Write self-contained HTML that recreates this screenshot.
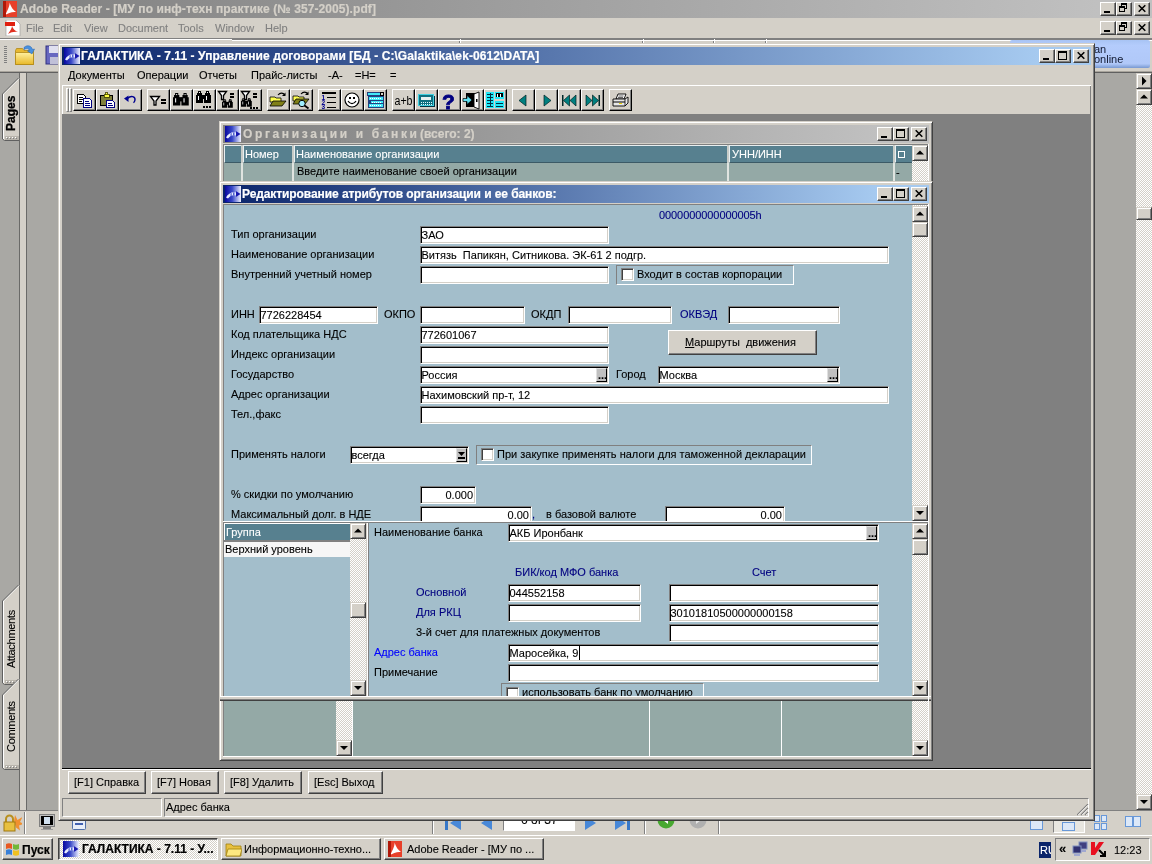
<!DOCTYPE html>
<html lang="ru">
<head>
<meta charset="utf-8">
<title>ГАЛАКТИКА - 7.11 - Управление договорами</title>
<style>
*{box-sizing:border-box;margin:0;padding:0}
html,body{width:1152px;height:864px;overflow:hidden;background:#d4d0c8}
body{position:relative;font:11px "Liberation Sans",sans-serif;color:#000}
div,svg,span.a{position:absolute}
.t{white-space:pre;line-height:14px;height:14px;-webkit-text-stroke:0.1px currentColor}
.b{font-weight:bold}
.tt{white-space:pre;font:bold 12px "Liberation Sans",sans-serif;line-height:16px;height:16px;-webkit-text-stroke:0.2px currentColor}
.rb{background:#d4d0c8;border:1px solid;border-color:#fff #404040 #404040 #fff;box-shadow:inset -1px -1px 0 #808080}
.rb2{background:#d4d0c8;border:1px solid;border-color:#d4d0c8 #404040 #404040 #d4d0c8;box-shadow:inset 1px 1px 0 #fff,inset -1px -1px 0 #808080}
.sk{border:1px solid;border-color:#808080 #fff #fff #808080}
.fld{background:#fff;border:1px solid;border-color:#808080 #fff #fff #808080;box-shadow:inset 1px 1px 0 #000,inset -1px -1px 0 #d4d0c8;padding:1px}
.gb{border:1px solid;border-color:#808080 #fff #fff #808080}
.fld .t{line-height:14px}
#root{left:0;top:0;width:1152px;height:864px;will-change:transform;overflow:hidden}
.chk{background:repeating-conic-gradient(#fff 0 25%,#d4d0c8 0 50%) 0 0/2px 2px}
.win{background:#d4d0c8;border:1px solid;border-color:#d4d0c8 #404040 #404040 #d4d0c8;box-shadow:inset 1px 1px 0 #fff,inset -1px -1px 0 #808080}

.tb{background:#d4d0c8;border:1px solid;border-color:#fff #000 #000 #fff;box-shadow:inset -1px -1px 0 #808080}
</style>
</head>
<body>
<div id="root">
<!-- Adobe Reader (background window) -->
<div style="left:0px;top:0px;width:1152px;height:18px;background:linear-gradient(90deg,#808080,#c0c0c0 1098px)"></div>
<svg style="left:3px;top:1px;" width="16" height="16" viewBox="0 0 16 16"><rect x="0" y="0" width="14" height="16" fill="#e8402a"/><path d="M2 14C5 9 7 4 6.5 1.5C8 6 10 9 13 11C9 10.5 5 12 2 14z" fill="#fff"/><path d="M0 0h3v16h-3z" fill="#b01808"/></svg>
<div class="tt" style="left:20px;top:1px;color:#d4d0c8;letter-spacing:0.08px">Adobe Reader - [МУ по инф-техн практике (№ 357-2005).pdf]</div>
<div class="rb" style="left:1100px;top:2px;width:16px;height:14px;"><svg style="left:-1px;top:-1px" width="16" height="14" viewBox="0 0 16 14"><rect x="4" y="9" width="6" height="2" fill="#000"/></svg></div>
<div class="rb" style="left:1116px;top:2px;width:16px;height:14px;"><svg style="left:-1px;top:-1px" width="16" height="14" viewBox="0 0 16 14"><rect x="5.5" y="1.5" width="5" height="5" fill="none" stroke="#000"/><rect x="5" y="1" width="6" height="2" fill="#000"/><rect x="3.5" y="4.5" width="5" height="5" fill="#d4d0c8" stroke="#000"/><rect x="3" y="4" width="6" height="2" fill="#000"/></svg></div>
<div class="rb" style="left:1134px;top:2px;width:16px;height:14px;"><svg style="left:-1px;top:-1px" width="16" height="14" viewBox="0 0 16 14"><path d="M4.7 3.3L11.3 9.7M11.3 3.3L4.7 9.7" stroke="#000" stroke-width="1.6" fill="none"/></svg></div>
<div style="left:0px;top:18px;width:1152px;height:20px;background:#d4d0c8"></div>
<svg style="left:5px;top:20px;" width="16" height="16" viewBox="0 0 16 16"><path d="M1 0h10l4 4v12h-14z" fill="#fff" stroke="#999" stroke-width="0.6"/><rect x="0" y="2" width="10" height="4" fill="#e02010"/><path d="M3 14C5 11 7 8 7 6C8 9 10 11 13 12C9 11.5 6 12.5 3 14z" fill="#e03020"/></svg>
<div class="t" style="left:26px;top:21px;color:#808080">File</div>
<div class="t" style="left:53px;top:21px;color:#808080">Edit</div>
<div class="t" style="left:84px;top:21px;color:#808080">View</div>
<div class="t" style="left:118px;top:21px;color:#808080">Document</div>
<div class="t" style="left:178px;top:21px;color:#808080">Tools</div>
<div class="t" style="left:215px;top:21px;color:#808080">Window</div>
<div class="t" style="left:265px;top:21px;color:#808080">Help</div>
<div class="rb" style="left:1100px;top:21px;width:16px;height:14px;"><svg style="left:-1px;top:-1px" width="16" height="14" viewBox="0 0 16 14"><rect x="4" y="9" width="6" height="2" fill="#000"/></svg></div>
<div class="rb" style="left:1116px;top:21px;width:16px;height:14px;"><svg style="left:-1px;top:-1px" width="16" height="14" viewBox="0 0 16 14"><rect x="5.5" y="1.5" width="5" height="5" fill="none" stroke="#000"/><rect x="5" y="1" width="6" height="2" fill="#000"/><rect x="3.5" y="4.5" width="5" height="5" fill="#d4d0c8" stroke="#000"/><rect x="3" y="4" width="6" height="2" fill="#000"/></svg></div>
<div class="rb" style="left:1134px;top:21px;width:16px;height:14px;"><svg style="left:-1px;top:-1px" width="16" height="14" viewBox="0 0 16 14"><path d="M4.7 3.3L11.3 9.7M11.3 3.3L4.7 9.7" stroke="#000" stroke-width="1.6" fill="none"/></svg></div>
<div style="left:0px;top:38px;width:1152px;height:1px;background:#808080"></div>
<div style="left:0px;top:39px;width:1152px;height:1px;background:#fff"></div>
<div style="left:0px;top:40px;width:1152px;height:31px;background:#d4d0c8"></div>
<div style="left:4px;top:46px;width:3px;height:18px;background:repeating-linear-gradient(180deg,#808080 0 1px,#d4d0c8 1px 2px)"></div>
<svg style="left:14px;top:44px;" width="24" height="24" viewBox="0 0 24 24"><defs><linearGradient id="fg" x1="0" y1="0" x2="0" y2="1"><stop offset="0" stop-color="#fff0a0"/><stop offset="1" stop-color="#e8b828"/></linearGradient></defs><path d="M1.5 6.5l1-2h6l1.5 2h9.5v14h-18z" fill="#e8b830" stroke="#b08818" stroke-width="0.8"/><path d="M1.5 8.5h18v12h-18z" fill="url(#fg)" stroke="#b08818" stroke-width="0.8"/><path d="M10 3.5c3-3 7.5-2 8.5 2l2-0.5l-2.5 5l-4.5-3l2-0.7c-1-2-3-2.3-5.5-0.8z" fill="#4890e0" stroke="#2060b0" stroke-width="0.5"/></svg>
<svg style="left:45px;top:45px;" width="20" height="20" viewBox="0 0 20 20"><rect x="1" y="1" width="18" height="18" fill="#6868c0" stroke="#303080"/><rect x="4" y="1" width="12" height="7" fill="#e0e0f0"/><rect x="5" y="12" width="10" height="7" fill="#c0c0d8"/></svg>
<div style="left:232px;top:39px;width:920px;height:1px;background:#808080"></div>
<div style="left:459px;top:39px;width:1px;height:4px;background:#808080"></div>
<div style="left:460px;top:39px;width:1px;height:4px;background:#fff"></div>
<div style="left:642px;top:39px;width:1px;height:4px;background:#808080"></div>
<div style="left:643px;top:39px;width:1px;height:4px;background:#fff"></div>
<div style="left:713px;top:39px;width:1px;height:4px;background:#808080"></div>
<div style="left:714px;top:39px;width:1px;height:4px;background:#fff"></div>
<div style="left:765px;top:39px;width:1px;height:4px;background:#808080"></div>
<div style="left:766px;top:39px;width:1px;height:4px;background:#fff"></div>
<div style="left:232px;top:40px;width:920px;height:1px;background:#fff"></div>
<div style="left:1010px;top:40px;width:140px;height:28px;background:linear-gradient(180deg,#a8c4f4,#b4ccfc 20%,#b0c8f8 85%,#7898d0);border-radius:2px"></div>
<div class="t" style="left:1094px;top:42px;color:#101830;font-size:11px;-webkit-text-stroke:0">an</div>
<div class="t" style="left:1094px;top:52px;color:#101830;font-size:11px;-webkit-text-stroke:0">online</div>
<div style="left:0px;top:71px;width:1152px;height:1px;background:#a8a49c"></div>
<div style="left:0px;top:72px;width:1152px;height:1px;background:#606060"></div>
<div style="left:0px;top:73px;width:20px;height:737px;background:#a9a8a4"></div>
<div style="left:19px;top:73px;width:1px;height:737px;background:#6a6a68"></div>
<div style="left:20px;top:73px;width:6px;height:737px;background:#d4d0c8"></div>
<div style="left:26px;top:73px;width:1px;height:737px;background:#6a6a68"></div>
<div style="left:27px;top:73px;width:1109px;height:737px;background:#a9a8a4"></div>
<svg style="left:0px;top:78px;" width="20" height="64" viewBox="0 0 20 64"><polygon points="19,0 3,16 3,61 5,63 19,63" fill="#d4d0c8"/><polyline points="19,0.5 3.5,16 3.5,61" fill="none" stroke="#fff" stroke-width="1"/><polyline points="19,-0.5 2.5,16 2.5,61 4.5,62.5 19,62.5" fill="none" stroke="#606060" stroke-width="1"/><rect x="5" y="58" width="14" height="4" fill="#b8b4ac"/><rect x="6" y="59" width="1" height="1" fill="#fff"/><rect x="7" y="60" width="1" height="1" fill="#808080"/><rect x="9" y="59" width="1" height="1" fill="#fff"/><rect x="10" y="60" width="1" height="1" fill="#808080"/><rect x="12" y="59" width="1" height="1" fill="#fff"/><rect x="13" y="60" width="1" height="1" fill="#808080"/><rect x="15" y="59" width="1" height="1" fill="#fff"/><rect x="16" y="60" width="1" height="1" fill="#808080"/></svg><div class="t" style="left:4px;top:131px;font-weight:bold;font-size:12px;-webkit-text-stroke:0.3px #000;transform-origin:0 0;transform:rotate(-90deg)">Pages</div>
<svg style="left:0px;top:585px;" width="20" height="101" viewBox="0 0 20 101"><polygon points="19,0 3,16 3,98 5,100 19,100" fill="#d4d0c8"/><polyline points="19,0.5 3.5,16 3.5,98" fill="none" stroke="#fff" stroke-width="1"/><polyline points="19,-0.5 2.5,16 2.5,98 4.5,99.5 19,99.5" fill="none" stroke="#606060" stroke-width="1"/><rect x="5" y="95" width="14" height="4" fill="#b8b4ac"/><rect x="6" y="96" width="1" height="1" fill="#fff"/><rect x="7" y="97" width="1" height="1" fill="#808080"/><rect x="9" y="96" width="1" height="1" fill="#fff"/><rect x="10" y="97" width="1" height="1" fill="#808080"/><rect x="12" y="96" width="1" height="1" fill="#fff"/><rect x="13" y="97" width="1" height="1" fill="#808080"/><rect x="15" y="96" width="1" height="1" fill="#fff"/><rect x="16" y="97" width="1" height="1" fill="#808080"/></svg><div class="t" style="left:4px;top:668px;font-weight:normal;font-size:11px;letter-spacing:-0.3px;transform-origin:0 0;transform:rotate(-90deg)">Attachments</div>
<svg style="left:0px;top:679px;" width="20" height="92" viewBox="0 0 20 92"><polygon points="19,0 3,16 3,89 5,91 19,91" fill="#d4d0c8"/><polyline points="19,0.5 3.5,16 3.5,89" fill="none" stroke="#fff" stroke-width="1"/><polyline points="19,-0.5 2.5,16 2.5,89 4.5,90.5 19,90.5" fill="none" stroke="#606060" stroke-width="1"/><rect x="5" y="86" width="14" height="4" fill="#b8b4ac"/><rect x="6" y="87" width="1" height="1" fill="#fff"/><rect x="7" y="88" width="1" height="1" fill="#808080"/><rect x="9" y="87" width="1" height="1" fill="#fff"/><rect x="10" y="88" width="1" height="1" fill="#808080"/><rect x="12" y="87" width="1" height="1" fill="#fff"/><rect x="13" y="88" width="1" height="1" fill="#808080"/><rect x="15" y="87" width="1" height="1" fill="#fff"/><rect x="16" y="88" width="1" height="1" fill="#808080"/></svg><div class="t" style="left:4px;top:752px;font-weight:normal;font-size:11px;letter-spacing:-0.3px;transform-origin:0 0;transform:rotate(-90deg)">Comments</div>
<div class="chk" style="left:1136px;top:73px;width:16px;height:737px;"></div>
<div class="rb2" style="left:1136px;top:73px;width:16px;height:16px;"><svg style="left:-1px;top:-1px" width="16" height="16" viewBox="0 0 16 16"><path d="M6 3.5L10.5 8L6 12.5z" fill="#000"/></svg></div>
<div class="rb2" style="left:1136px;top:89px;width:16px;height:16px;"><svg style="left:-1px;top:-1px" width="16" height="16" viewBox="0 0 16 16"><path d="M4 9.5L8 5.5L12 9.5z" fill="#000"/></svg></div>
<div class="rb2" style="left:1136px;top:207px;width:16px;height:13px;"></div>
<div class="rb2" style="left:1136px;top:794px;width:16px;height:16px;"><svg style="left:-1px;top:-1px" width="16" height="16" viewBox="0 0 16 16"><path d="M4 6L12 6L8 10z" fill="#000"/></svg></div>
<div style="left:0px;top:810px;width:1152px;height:24px;background:#d4d0c8"></div>
<div style="left:0px;top:810px;width:1152px;height:1px;background:#808080"></div>
<svg style="left:2px;top:813px;" width="20" height="20" viewBox="0 0 20 20"><path d="M12 8l1-6l2.5 5l5-3l-2.5 5l4 2l-5 1.5l1 5l-4-3z" fill="#f09030"/><path d="M4 9v-3a3.5 3.5 0 0 1 7 0v3" fill="none" stroke="#b89020" stroke-width="2"/><rect x="2" y="9" width="11" height="9" fill="#e8c040" stroke="#a07810"/></svg>
<div style="left:24px;top:812px;width:1px;height:22px;background:#808080"></div>
<div style="left:25px;top:812px;width:1px;height:22px;background:#fff"></div>
<svg style="left:39px;top:814px;" width="16" height="17" viewBox="0 0 16 17"><rect x="0.5" y="0.5" width="15" height="12" fill="#c0c0c0" stroke="#808080"/><rect x="2" y="2" width="12" height="9" fill="#000"/><rect x="5" y="3" width="6" height="7" fill="#d0e0f0"/><rect x="4" y="13" width="8" height="2" fill="#808080"/><rect x="2" y="15" width="12" height="1" fill="#a0a0a0"/></svg>
<svg style="left:72px;top:816px;" width="14" height="14" viewBox="0 0 14 14"><rect x="0.5" y="0.5" width="13" height="13" rx="1" fill="#e8eef8" stroke="#5070a8"/><rect x="3" y="7" width="8" height="2" fill="#4060b0"/></svg>
<div style="left:432px;top:812px;width:1px;height:22px;background:#808080"></div>
<div style="left:433px;top:812px;width:1px;height:22px;background:#fff"></div>
<svg style="left:445px;top:816px;" width="18" height="16" viewBox="0 0 18 16"><rect x="0" y="0" width="3" height="14" fill="#3878c8"/><path d="M16 0v14l-11-7z" fill="#4888d8"/></svg>
<svg style="left:480px;top:816px;" width="14" height="16" viewBox="0 0 14 16"><path d="M12 0v14l-11-7z" fill="#4888d8"/></svg>
<div style="left:503px;top:812px;width:72px;height:19px;background:#fff;border:1px solid;border-color:#808080 #fff #fff #808080"></div>
<div class="t" style="left:521px;top:813px;font-size:12px">6 of 37</div>
<svg style="left:584px;top:816px;" width="14" height="16" viewBox="0 0 14 16"><path d="M1 0v14l11-7z" fill="#4888d8"/></svg>
<svg style="left:614px;top:816px;" width="18" height="16" viewBox="0 0 18 16"><path d="M1 0v14l11-7z" fill="#4888d8"/><rect x="13" y="0" width="3" height="14" fill="#3878c8"/></svg>
<div style="left:644px;top:812px;width:1px;height:22px;background:#808080"></div>
<div style="left:645px;top:812px;width:1px;height:22px;background:#fff"></div>
<svg style="left:657px;top:811px;" width="18" height="18" viewBox="0 0 18 18"><circle cx="9" cy="9" r="8.5" fill="#48a830"/><path d="M11 5l-5 4l5 4z" fill="#fff"/></svg>
<svg style="left:689px;top:811px;" width="18" height="18" viewBox="0 0 18 18"><circle cx="9" cy="9" r="8.5" fill="#b0b0b0"/><path d="M7 5l5 4l-5 4z" fill="#e8e8e8"/></svg>
<div style="left:718px;top:812px;width:1px;height:22px;background:#808080"></div>
<div style="left:719px;top:812px;width:1px;height:22px;background:#fff"></div>
<svg style="left:1030px;top:817px;" width="14" height="14" viewBox="0 0 14 14"><rect x="0.5" y="0.5" width="12" height="12" fill="#dce8f8" stroke="#6898d8"/></svg>
<div style="left:1053px;top:812px;width:32px;height:21px;background:#e8e6e0;border:1px solid;border-color:#808080 #fff #fff #808080"></div>
<svg style="left:1062px;top:817px;" width="14" height="14" viewBox="0 0 14 14"><rect x="0.5" y="0.5" width="12" height="3" fill="#dce8f8" stroke="#6898d8"/><rect x="0.5" y="5.5" width="12" height="8" fill="#dce8f8" stroke="#6898d8"/></svg>
<svg style="left:1094px;top:815px;" width="14" height="16" viewBox="0 0 14 16"><rect x="0.5" y="0.5" width="5" height="6" fill="#dce8f8" stroke="#6898d8"/><rect x="7.5" y="0.5" width="5" height="6" fill="#dce8f8" stroke="#6898d8"/><rect x="0.5" y="8.5" width="5" height="6" fill="#dce8f8" stroke="#6898d8"/><rect x="7.5" y="8.5" width="5" height="6" fill="#dce8f8" stroke="#6898d8"/></svg>
<svg style="left:1125px;top:816px;" width="17" height="12" viewBox="0 0 17 12"><rect x="0.5" y="0.5" width="7" height="10" fill="#dce8f8" stroke="#6898d8"/><rect x="8.5" y="0.5" width="7" height="10" fill="#dce8f8" stroke="#6898d8"/></svg>
<!-- Taskbar -->
<div style="left:0px;top:834px;width:1152px;height:30px;background:#d4d0c8"></div>
<div style="left:0px;top:835px;width:1152px;height:1px;background:#fff"></div>
<div class="rb" style="left:2px;top:838px;width:51px;height:22px;"></div>
<svg style="left:5px;top:841px;" width="16" height="16" viewBox="0 0 16 16"><path d="M1 3c2-1 4-1 6 0v5c-2-1-4-1-6 0z" fill="#e85820"/><path d="M8 3c2 1 4 1 6 0v5c-2 1-4 1-6 0z" fill="#70b838"/><path d="M1 9c2-1 4-1 6 0v5c-2-1-4-1-6 0z" fill="#3880d8"/><path d="M8 9c2 1 4 1 6 0v5c-2 1-4 1-6 0z" fill="#f0c020"/></svg>
<div class="tt" style="left:22px;top:842px;font-size:12px">Пуск</div>
<div class="chk" style="left:58px;top:838px;width:160px;height:22px;border:1px solid;border-color:#404040 #fff #fff #404040;box-shadow:inset 1px 1px 0 #808080"></div>
<svg style="left:63px;top:841px;" width="16" height="16" viewBox="0 0 16 16"><defs><linearGradient id="gi1" x1="0" x2="1"><stop offset="0" stop-color="#0808a0"/><stop offset="0.45" stop-color="#3848c8"/><stop offset="1" stop-color="#f0f2ff"/></linearGradient></defs><rect width="16" height="16" fill="url(#gi1)"/><path d="M1 11.5c2-4 6-6 10-5l0-1.5l4.5 3l-4.5 3l0-1.5c-3-1-6 0-8 3z" fill="#e8ecff"/><path d="M8 6.5l1.5-0.3l0 3l-1.5 0.3zM5.5 7.5l1.2-0.6l0 3l-1.2 0.6z" fill="#5060d0"/><path d="M11 5l4.5 3l-4.5 3z" fill="#1818b0"/></svg>
<div class="tt" style="left:82px;top:841px;">ГАЛАКТИКА - 7.11 - У...</div>
<div class="rb" style="left:221px;top:838px;width:160px;height:22px;"></div>
<svg style="left:225px;top:841px;" width="17" height="16" viewBox="0 0 17 16"><path d="M1 3h5l2 2h8v10h-15z" fill="#e8c040" stroke="#a08010" stroke-width="0.8"/><path d="M1 15l2-7h14l-2 7z" fill="#fce880" stroke="#a08010" stroke-width="0.8"/></svg>
<div class="t" style="left:244px;top:842px;">Информационно-техно...</div>
<div class="rb" style="left:384px;top:838px;width:160px;height:22px;"></div>
<svg style="left:388px;top:841px;" width="16" height="16" viewBox="0 0 16 16"><rect x="0" y="0" width="14" height="16" fill="#e8402a"/><path d="M2 14C5 9 7 4 6.5 1.5C8 6 10 9 13 11C9 10.5 5 12 2 14z" fill="#fff"/><path d="M0 0h3v16h-3z" fill="#b01808"/></svg>
<div class="t" style="left:407px;top:842px;">Adobe Reader - [МУ по ...</div>
<div style="left:1039px;top:842px;width:12px;height:16px;background:#0a246a"></div>
<div class="t" style="left:1040px;top:843px;color:#fff;width:11px;overflow:hidden">RU</div>
<div style="left:1055px;top:838px;width:95px;height:23px;border:1px solid;border-color:#808080 #fff #fff #808080"></div>
<div class="t" style="left:1059px;top:842px;font-weight:bold;font-size:13px">«</div>
<svg style="left:1072px;top:841px;" width="16" height="16" viewBox="0 0 16 16"><rect x="7" y="1" width="8" height="7" fill="#404080" stroke="#8090c0"/><rect x="1" y="5" width="8" height="7" fill="#303070" stroke="#8090c0"/><rect x="2" y="13" width="6" height="2" fill="#a0a8d0"/><rect x="9" y="9" width="5" height="2" fill="#a0a8d0"/></svg>
<svg style="left:1090px;top:841px;" width="16" height="16" viewBox="0 0 16 16"><path d="M1 1h4v6l4-6h5l-9 13h-4z" fill="#e81020"/><path d="M9 9l6 6m0-5v5h-5" stroke="#000" stroke-width="2" fill="none"/></svg>
<div class="t" style="left:1114px;top:843px;">12:23</div>
<!-- Galaktika main window -->
<div class="win" style="left:58px;top:43px;width:1037px;height:778px;"></div>
<div style="left:62px;top:47px;width:1029px;height:18px;background:linear-gradient(90deg,#0a246a,#a6caf0 977px)"></div>
<svg style="left:64px;top:48px;" width="16" height="16" viewBox="0 0 16 16"><defs><linearGradient id="gi2" x1="0" x2="1"><stop offset="0" stop-color="#0808a0"/><stop offset="0.45" stop-color="#3848c8"/><stop offset="1" stop-color="#f0f2ff"/></linearGradient></defs><rect width="16" height="16" fill="url(#gi2)"/><path d="M1 11.5c2-4 6-6 10-5l0-1.5l4.5 3l-4.5 3l0-1.5c-3-1-6 0-8 3z" fill="#e8ecff"/><path d="M8 6.5l1.5-0.3l0 3l-1.5 0.3zM5.5 7.5l1.2-0.6l0 3l-1.2 0.6z" fill="#5060d0"/><path d="M11 5l4.5 3l-4.5 3z" fill="#1818b0"/></svg>
<div class="tt" style="left:81px;top:48px;color:#fff;letter-spacing:0.08px">ГАЛАКТИКА - 7.11 - Управление договорами [БД - C:\Galaktika\ek-0612\DATA]</div>
<div class="rb" style="left:1039px;top:49px;width:16px;height:14px;"><svg style="left:-1px;top:-1px" width="16" height="14" viewBox="0 0 16 14"><rect x="4" y="9" width="6" height="2" fill="#000"/></svg></div>
<div class="rb" style="left:1055px;top:49px;width:16px;height:14px;"><svg style="left:-1px;top:-1px" width="16" height="14" viewBox="0 0 16 14"><rect x="3.5" y="2.5" width="8" height="8" fill="none" stroke="#000"/><rect x="3" y="2" width="9" height="2" fill="#000"/></svg></div>
<div class="rb" style="left:1073px;top:49px;width:16px;height:14px;"><svg style="left:-1px;top:-1px" width="16" height="14" viewBox="0 0 16 14"><path d="M4.7 3.3L11.3 9.7M11.3 3.3L4.7 9.7" stroke="#000" stroke-width="1.6" fill="none"/></svg></div>
<div class="t" style="left:68px;top:68px;">Документы</div>
<div class="t" style="left:137px;top:68px;">Операции</div>
<div class="t" style="left:199px;top:68px;">Отчеты</div>
<div class="t" style="left:251px;top:68px;">Прайс-листы</div>
<div class="t" style="left:328px;top:68px;">-А-</div>
<div class="t" style="left:355px;top:68px;">=Н=</div>
<div class="t" style="left:390px;top:68px;">=</div>
<div style="left:62px;top:85px;width:1029px;height:1px;background:#fff"></div>
<div style="left:62px;top:85px;width:1px;height:29px;background:#fff"></div>
<div style="left:1090px;top:86px;width:1px;height:28px;background:#808080"></div>
<div style="left:66px;top:88px;width:3px;height:24px;border:1px solid;border-color:#fff #808080 #808080 #fff;background:#d4d0c8"></div>
<div style="left:69px;top:88px;width:3px;height:24px;border:1px solid;border-color:#fff #808080 #808080 #fff;background:#d4d0c8"></div>
<div class="tb" style="left:73px;top:89px;width:23px;height:22px;"><svg style="left:-1px;top:-1px" width="23" height="22" viewBox="0 0 23 22"><g shape-rendering="crispEdges"><path d="M4.5 5.5h6l2 2v7h-8z" fill="#fff" stroke="#000"/><path d="M6 8.5h4M6 10.5h5M6 12.5h3" stroke="#000" stroke-width="1"/><path d="M10.5 9.5h6l2 2v7h-8z" fill="#fff" stroke="#000080"/><path d="M12 12.5h4M12 14.5h5M12 16.5h5" stroke="#000080" stroke-width="1"/></g></svg></div><div class="tb" style="left:96px;top:89px;width:23px;height:22px;"><svg style="left:-1px;top:-1px" width="23" height="22" viewBox="0 0 23 22"><g shape-rendering="crispEdges"><rect x="4.5" y="6.5" width="12" height="10" fill="#80803c" stroke="#000"/><rect x="8" y="5" width="5" height="3" fill="#ffff40" stroke="#404000" stroke-width="0.8"/><rect x="9.5" y="3.5" width="2" height="2" fill="#ffff40" stroke="#404000" stroke-width="0.8"/><path d="M10.5 11.5h6l2 2v5h-8z" fill="#fff" stroke="#000080"/><path d="M12 14.5h4M12 16.5h5" stroke="#000080" stroke-width="1"/></g></svg></div><div class="tb" style="left:119px;top:89px;width:23px;height:22px;"><svg style="left:-1px;top:-1px" width="23" height="22" viewBox="0 0 23 22"><path d="M5 9.5l4.5-3v6.5z" fill="#000090"/><path d="M8.5 9.5c3.5-3.5 8-2 7.5 1.5c-0.2 1.5-0.8 2.2-1.5 2.8" fill="none" stroke="#000090" stroke-width="1.4"/></svg></div><div class="tb" style="left:147px;top:89px;width:23px;height:22px;"><svg style="left:-1px;top:-1px" width="23" height="22" viewBox="0 0 23 22"><path d="M3.5 7.5h9l-3.5 4.5v4h-2v-4z" fill="#fff" stroke="#000" stroke-width="1.3" stroke-linejoin="miter"/><rect x="14" y="10" width="5" height="2" fill="#000"/><rect x="14" y="13" width="5" height="2" fill="#000"/></svg></div><div class="tb" style="left:170px;top:89px;width:23px;height:22px;"><svg style="left:-1px;top:-1px" width="23" height="22" viewBox="0 0 23 22"><g transform="translate(3,4) scale(1.05)"><path d="M2 0h3v2h1v2h1v8h-7v-8h1v-2h1zM10 0h3v2h1v2h1v8h-7v-8h1v-2h1z" fill="#000"/><rect x="6" y="4" width="3" height="4" fill="#000"/><rect x="2" y="5" width="1" height="4" fill="#fff"/><rect x="10" y="5" width="1" height="4" fill="#fff"/><rect x="3" y="1" width="1" height="1" fill="#fff"/><rect x="11" y="1" width="1" height="1" fill="#fff"/></g></svg></div><div class="tb" style="left:193px;top:89px;width:23px;height:22px;"><svg style="left:-1px;top:-1px" width="23" height="22" viewBox="0 0 23 22"><g transform="translate(3,2) scale(1.0)"><path d="M2 0h3v2h1v2h1v8h-7v-8h1v-2h1zM10 0h3v2h1v2h1v8h-7v-8h1v-2h1z" fill="#000"/><rect x="6" y="4" width="3" height="4" fill="#000"/><rect x="2" y="5" width="1" height="4" fill="#fff"/><rect x="10" y="5" width="1" height="4" fill="#fff"/><rect x="3" y="1" width="1" height="1" fill="#fff"/><rect x="11" y="1" width="1" height="1" fill="#fff"/></g><rect x="10" y="17" width="2" height="2" fill="#000"/><rect x="13" y="17" width="2" height="2" fill="#000"/><rect x="16" y="17" width="2" height="2" fill="#000"/></svg></div><div class="tb" style="left:216px;top:89px;width:23px;height:22px;"><svg style="left:-1px;top:-1px" width="23" height="22" viewBox="0 0 23 22"><path d="M2.5 2.5h8l-3.0 4.0v4h-2v-4z" fill="#fff" stroke="#000" stroke-width="1.3" stroke-linejoin="miter"/><rect x="14" y="4" width="4" height="2" fill="#000"/><rect x="14" y="7" width="4" height="2" fill="#000"/><g transform="translate(6,10) scale(0.72)"><path d="M2 0h3v2h1v2h1v8h-7v-8h1v-2h1zM10 0h3v2h1v2h1v8h-7v-8h1v-2h1z" fill="#000"/><rect x="6" y="4" width="3" height="4" fill="#000"/><rect x="2" y="5" width="1" height="4" fill="#fff"/><rect x="10" y="5" width="1" height="4" fill="#fff"/><rect x="3" y="1" width="1" height="1" fill="#fff"/><rect x="11" y="1" width="1" height="1" fill="#fff"/></g></svg></div><div class="tb" style="left:239px;top:89px;width:23px;height:22px;"><svg style="left:-1px;top:-1px" width="23" height="22" viewBox="0 0 23 22"><path d="M2.5 2.5h8l-3.0 4.0v4h-2v-4z" fill="#fff" stroke="#000" stroke-width="1.3" stroke-linejoin="miter"/><rect x="14" y="4" width="4" height="2" fill="#000"/><rect x="14" y="7" width="4" height="2" fill="#000"/><g transform="translate(2,9) scale(0.72)"><path d="M2 0h3v2h1v2h1v8h-7v-8h1v-2h1zM10 0h3v2h1v2h1v8h-7v-8h1v-2h1z" fill="#000"/><rect x="6" y="4" width="3" height="4" fill="#000"/><rect x="2" y="5" width="1" height="4" fill="#fff"/><rect x="10" y="5" width="1" height="4" fill="#fff"/><rect x="3" y="1" width="1" height="1" fill="#fff"/><rect x="11" y="1" width="1" height="1" fill="#fff"/></g><rect x="11" y="18" width="2" height="2" fill="#000"/><rect x="14" y="18" width="2" height="2" fill="#000"/><rect x="17" y="18" width="2" height="2" fill="#000"/></svg></div><div class="tb" style="left:267px;top:89px;width:23px;height:22px;"><svg style="left:-1px;top:-1px" width="23" height="22" viewBox="0 0 23 22"><path d="M3 8h5l1 1h5v4h-11z" fill="#ffff50" stroke="#000" stroke-width="0.8"/><path d="M3 17l3-5h13l-4 5z" fill="#808018" stroke="#000" stroke-width="0.8"/><path d="M11 6c2-2.5 5-2.5 7 0" fill="none" stroke="#000" stroke-width="1.1"/><path d="M18.5 3.5v3.5h-3.5z" fill="#000"/></svg></div><div class="tb" style="left:290px;top:89px;width:23px;height:22px;"><svg style="left:-1px;top:-1px" width="23" height="22" viewBox="0 0 23 22"><path d="M3 7h5l1 1h5v4h-11z" fill="#ffff50" stroke="#000" stroke-width="0.8"/><path d="M3 15l3-5h13l-4 5z" fill="#808018" stroke="#000" stroke-width="0.8"/><path d="M11 5c2-2.5 5-2.5 7 0" fill="none" stroke="#000" stroke-width="1.1"/><path d="M18.5 2.5v3.5h-3.5z" fill="#000"/><circle cx="12" cy="14.5" r="3.2" fill="#a0f0ff" stroke="#000" stroke-width="1"/><path d="M14.5 16.5l4 3" stroke="#000" stroke-width="1.8"/></svg></div><div class="tb" style="left:318px;top:89px;width:23px;height:22px;"><svg style="left:-1px;top:-1px" width="23" height="22" viewBox="0 0 23 22"><g shape-rendering="crispEdges"><rect x="4" y="3" width="14" height="2" fill="#000"/><path d="M9 8.5h9M9 13.5h9M9 18.5h9" stroke="#000" stroke-width="1"/></g><text x="3.5" y="10.5" font-family="Liberation Sans,sans-serif" font-size="6.500" font-weight="bold" fill="#000090">1</text><text x="3.5" y="15.5" font-family="Liberation Sans,sans-serif" font-size="6.500" font-weight="bold" fill="#000090">2</text><text x="3.5" y="20" font-family="Liberation Sans,sans-serif" font-size="6.500" font-weight="bold" fill="#000090">3</text></svg></div><div class="tb" style="left:341px;top:89px;width:23px;height:22px;"><svg style="left:-1px;top:-1px" width="23" height="22" viewBox="0 0 23 22"><circle cx="11" cy="11" r="7" fill="#fff" stroke="#000" stroke-width="1.2"/><rect x="8" y="8" width="2" height="2" fill="#000"/><rect x="12" y="8" width="2" height="2" fill="#000"/><path d="M7 12c2 3.5 6 3.5 8 0" fill="none" stroke="#000" stroke-width="1.2"/></svg></div><div class="tb" style="left:364px;top:89px;width:23px;height:22px;"><svg style="left:-1px;top:-1px" width="23" height="22" viewBox="0 0 23 22"><g shape-rendering="crispEdges"><rect x="4" y="5" width="16" height="14" fill="#204080"/><rect x="3" y="3" width="13" height="3" fill="#40e8f8" stroke="#204080" stroke-width="1"/><rect x="16.5" y="3.5" width="3" height="3" fill="#d4d0c8" stroke="#000" stroke-width="1"/><rect x="5" y="8" width="14" height="3" fill="#40e8f8"/><rect x="7" y="12" width="12" height="2" fill="#40e8f8"/><rect x="5" y="15" width="14" height="3" fill="#40e8f8"/><path d="M6 9.5h12M8 13h10M6 16.5h12" stroke="#fff" stroke-width="1" stroke-dasharray="1 1"/></g></svg></div><div class="tb" style="left:392px;top:89px;width:23px;height:22px;"><svg style="left:-1px;top:-1px" width="23" height="22" viewBox="0 0 23 22"><text x="2.5" y="16" font-family="Liberation Sans,sans-serif" font-size="12" fill="#000" textLength="18" lengthAdjust="spacingAndGlyphs">a+b</text></svg></div><div class="tb" style="left:415px;top:89px;width:23px;height:22px;"><svg style="left:-1px;top:-1px" width="23" height="22" viewBox="0 0 23 22"><g shape-rendering="crispEdges"><rect x="3.5" y="5.5" width="15" height="11" fill="#107080" stroke="#40d0e0" stroke-width="1"/><rect x="5" y="17" width="15" height="1" fill="#003040"/><rect x="19" y="7" width="1" height="10" fill="#003040"/><rect x="6" y="8" width="10" height="3" fill="#e8f0f0"/><path d="M6 13.5h11" stroke="#e0f8ff" stroke-width="1" stroke-dasharray="1 1"/><path d="M6 15.5h11" stroke="#e0f8ff" stroke-width="1" stroke-dasharray="1 1"/></g></svg></div><div class="tb" style="left:438px;top:89px;width:23px;height:22px;"><svg style="left:-1px;top:-1px" width="23" height="22" viewBox="0 0 23 22"><text x="4" y="19.5" font-family="Liberation Sans,sans-serif" font-size="21" font-weight="bold" fill="#000080" stroke="#000080" stroke-width="0.8">?</text></svg></div><div class="tb" style="left:461px;top:89px;width:23px;height:22px;"><svg style="left:-1px;top:-1px" width="23" height="22" viewBox="0 0 23 22"><rect x="5" y="4" width="9" height="14" fill="#000"/><path d="M13 5l5-2v17l-5-2z" fill="#fff" stroke="#000" stroke-width="0.9"/><rect x="15" y="10" width="1.5" height="3" fill="#000"/><path d="M2 9.5h4v-3l5 4.5l-5 4.5v-3h-4z" fill="#60e0f0" stroke="#000" stroke-width="0.7"/></svg></div><div class="tb" style="left:484px;top:89px;width:23px;height:22px;"><svg style="left:-1px;top:-1px" width="23" height="22" viewBox="0 0 23 22"><g shape-rendering="crispEdges"><rect x="2" y="3" width="8" height="16" fill="#20e8f8"/><path d="M3 5.5h6M3 8.5h6M3 11.5h6M3 14.5h6M3 17.5h6M6.5 4v14" stroke="#003040" stroke-width="1"/><rect x="11" y="3" width="9" height="7" fill="#20e8f8"/><rect x="12" y="4" width="7" height="4" fill="#000"/><path d="M13.5 5v3M16.5 5v3" stroke="#fff"/><rect x="11" y="12" width="9" height="7" fill="#20e8f8"/><path d="M12 14.5h7M12 17.5h7" stroke="#003040"/></g></svg></div><div class="tb" style="left:512px;top:89px;width:23px;height:22px;"><svg style="left:-1px;top:-1px" width="23" height="22" viewBox="0 0 23 22"><path d="M14 6v11l-7-5.5z" fill="#008080" stroke="#002020" stroke-width="0.7"/></svg></div><div class="tb" style="left:535px;top:89px;width:23px;height:22px;"><svg style="left:-1px;top:-1px" width="23" height="22" viewBox="0 0 23 22"><path d="M9 6v11l7-5.5z" fill="#008080" stroke="#002020" stroke-width="0.7"/></svg></div><div class="tb" style="left:558px;top:89px;width:23px;height:22px;"><svg style="left:-1px;top:-1px" width="23" height="22" viewBox="0 0 23 22"><rect x="4" y="6" width="1.5" height="11" fill="#002828"/><path d="M11.5 6v11l-6-5.5zM18 6v11l-6-5.5z" fill="#008080" stroke="#002020" stroke-width="0.7"/></svg></div><div class="tb" style="left:581px;top:89px;width:23px;height:22px;"><svg style="left:-1px;top:-1px" width="23" height="22" viewBox="0 0 23 22"><path d="M5 6v11l6-5.5zM11.5 6v11l6-5.5z" fill="#008080" stroke="#002020" stroke-width="0.7"/><rect x="17.5" y="6" width="1.5" height="11" fill="#002828"/></svg></div><div class="tb" style="left:609px;top:89px;width:23px;height:22px;"><svg style="left:-1px;top:-1px" width="23" height="22" viewBox="0 0 23 22"><path d="M7 10l2-5h8l-2 5z" fill="#fff" stroke="#000" stroke-width="0.9"/><path d="M9.5 7h5M9 8.5h5" stroke="#000" stroke-width="0.6"/><path d="M4 10h12l3-2v6l-3 3h-12z" fill="#e8e8e8" stroke="#000" stroke-width="0.9"/><path d="M4 13h12" stroke="#000" stroke-width="1"/><rect x="10" y="14" width="3" height="1" fill="#e8d000"/><path d="M16 10v7" stroke="#000" stroke-width="0.8"/></svg></div>
<div style="left:62px;top:114px;width:1029px;height:654px;background:#808080"></div>
<div style="left:62px;top:768px;width:1029px;height:1px;background:#000"></div>
<div style="left:62px;top:769px;width:1029px;height:1px;background:#fff"></div>
<div class="rb" style="left:68px;top:771px;width:78px;height:23px;"></div>
<div class="t" style="left:74px;top:775px;">[F1] Справка</div>
<div class="rb" style="left:151px;top:771px;width:68px;height:23px;"></div>
<div class="t" style="left:157px;top:775px;">[F7] Новая</div>
<div class="rb" style="left:224px;top:771px;width:78px;height:23px;"></div>
<div class="t" style="left:230px;top:775px;">[F8] Удалить</div>
<div class="rb" style="left:308px;top:771px;width:75px;height:23px;"></div>
<div class="t" style="left:314px;top:775px;">[Esc] Выход</div>
<div class="sk" style="left:62px;top:798px;width:100px;height:19px;"></div>
<div class="sk" style="left:164px;top:798px;width:925px;height:19px;"></div>
<div class="t" style="left:166px;top:800px;">Адрес банка</div>
<svg style="left:1077px;top:804px;" width="12" height="12" viewBox="0 0 12 12"><path d="M11 0L0 11M11 4L4 11M11 8L8 11" stroke="#808080" stroke-width="1.2"/><path d="M11 1.2L1.2 11M11 5.2L5.2 11M11 9.2L9.2 11" stroke="#fff" stroke-width="0.8"/></svg>
<!-- MDI child: organisations list -->
<div class="win" style="left:219px;top:121px;width:714px;height:70px;"></div>
<div style="left:223px;top:125px;width:706px;height:18px;background:linear-gradient(90deg,#808080,#c0c0c0 654px)"></div>
<svg style="left:225px;top:126px;" width="16" height="16" viewBox="0 0 16 16"><defs><linearGradient id="gi3" x1="0" x2="1"><stop offset="0" stop-color="#0808a0"/><stop offset="0.45" stop-color="#3848c8"/><stop offset="1" stop-color="#f0f2ff"/></linearGradient></defs><rect width="16" height="16" fill="url(#gi3)"/><path d="M1 11.5c2-4 6-6 10-5l0-1.5l4.5 3l-4.5 3l0-1.5c-3-1-6 0-8 3z" fill="#e8ecff"/><path d="M8 6.5l1.5-0.3l0 3l-1.5 0.3zM5.5 7.5l1.2-0.6l0 3l-1.2 0.6z" fill="#5060d0"/><path d="M11 5l4.5 3l-4.5 3z" fill="#1818b0"/></svg>
<div class="tt" style="left:243px;top:126px;color:#d4d0c8;letter-spacing:-0.35px">О р г а н и з а ц и и   и   б а н к и</div>
<div class="tt" style="left:420px;top:126px;color:#d4d0c8">(всего: 2)</div>
<div class="rb" style="left:877px;top:127px;width:16px;height:14px;"><svg style="left:-1px;top:-1px" width="16" height="14" viewBox="0 0 16 14"><rect x="4" y="9" width="6" height="2" fill="#000"/></svg></div>
<div class="rb" style="left:893px;top:127px;width:16px;height:14px;"><svg style="left:-1px;top:-1px" width="16" height="14" viewBox="0 0 16 14"><rect x="3.5" y="2.5" width="8" height="8" fill="none" stroke="#000"/><rect x="3" y="2" width="9" height="2" fill="#000"/></svg></div>
<div class="rb" style="left:911px;top:127px;width:16px;height:14px;"><svg style="left:-1px;top:-1px" width="16" height="14" viewBox="0 0 16 14"><path d="M4.7 3.3L11.3 9.7M11.3 3.3L4.7 9.7" stroke="#000" stroke-width="1.6" fill="none"/></svg></div>
<div style="left:223px;top:144px;width:706px;height:38px;background:#94a9a6"></div>
<div style="left:223px;top:144px;width:706px;height:1px;background:#808080"></div>
<div style="left:223px;top:144px;width:1px;height:38px;background:#808080"></div>
<div style="left:928px;top:144px;width:1px;height:38px;background:#fff"></div>
<div style="left:224px;top:145px;width:17px;height:18px;background:#57808f;border-top:1px solid #e8eef0;border-left:1px solid #e8eef0;border-bottom:1px solid #3c5a66"></div>
<div style="left:243px;top:145px;width:50px;height:18px;background:#57808f;border-top:1px solid #e8eef0;border-left:1px solid #e8eef0;border-bottom:1px solid #3c5a66"></div>
<div class="t" style="left:245px;top:147px;color:#fff">Номер</div>
<div style="left:294px;top:145px;width:434px;height:18px;background:#57808f;border-top:1px solid #e8eef0;border-left:1px solid #e8eef0;border-bottom:1px solid #3c5a66"></div>
<div class="t" style="left:296px;top:147px;color:#fff">Наименование организации</div>
<div style="left:729px;top:145px;width:165px;height:18px;background:#57808f;border-top:1px solid #e8eef0;border-left:1px solid #e8eef0;border-bottom:1px solid #3c5a66"></div>
<div class="t" style="left:732px;top:147px;color:#fff">УНН/ИНН</div>
<div style="left:895px;top:145px;width:17px;height:18px;background:#57808f;border-top:1px solid #e8eef0;border-left:1px solid #e8eef0;border-bottom:1px solid #3c5a66"></div>
<div style="left:241px;top:145px;width:2px;height:18px;background:#c8ccc8"></div>
<div style="left:241px;top:163px;width:2px;height:19px;background:#e0e4e0"></div>
<div style="left:292px;top:145px;width:2px;height:18px;background:#c8ccc8"></div>
<div style="left:292px;top:163px;width:2px;height:19px;background:#e0e4e0"></div>
<div style="left:727px;top:145px;width:2px;height:18px;background:#c8ccc8"></div>
<div style="left:727px;top:163px;width:2px;height:19px;background:#e0e4e0"></div>
<div style="left:893px;top:145px;width:2px;height:18px;background:#c8ccc8"></div>
<div style="left:893px;top:163px;width:2px;height:19px;background:#e0e4e0"></div>
<div class="t" style="left:297px;top:164px;">Введите наименование своей организации</div>
<div style="left:898px;top:151px;width:7px;height:7px;border:1px solid #fff"></div>
<div class="t" style="left:896px;top:165px;">-</div>
<div class="chk" style="left:912px;top:145px;width:16px;height:37px;"></div>
<div class="rb2" style="left:912px;top:145px;width:16px;height:16px;"><svg style="left:-1px;top:-1px" width="16" height="16" viewBox="0 0 16 16"><path d="M4 9.5L8 5.5L12 9.5z" fill="#000"/></svg></div>
<!-- MDI child: edit attributes -->
<div class="win" style="left:219px;top:181px;width:714px;height:580px;"></div>
<div style="left:223px;top:185px;width:706px;height:18px;background:linear-gradient(90deg,#0a246a,#a6caf0 654px)"></div>
<svg style="left:225px;top:186px;" width="16" height="16" viewBox="0 0 16 16"><defs><linearGradient id="gi4" x1="0" x2="1"><stop offset="0" stop-color="#0808a0"/><stop offset="0.45" stop-color="#3848c8"/><stop offset="1" stop-color="#f0f2ff"/></linearGradient></defs><rect width="16" height="16" fill="url(#gi4)"/><path d="M1 11.5c2-4 6-6 10-5l0-1.5l4.5 3l-4.5 3l0-1.5c-3-1-6 0-8 3z" fill="#e8ecff"/><path d="M8 6.5l1.5-0.3l0 3l-1.5 0.3zM5.5 7.5l1.2-0.6l0 3l-1.2 0.6z" fill="#5060d0"/><path d="M11 5l4.5 3l-4.5 3z" fill="#1818b0"/></svg>
<div class="tt" style="left:242px;top:186px;color:#fff;letter-spacing:-0.08px">Редактирование атрибутов организации и ее банков:</div>
<div class="rb" style="left:877px;top:187px;width:16px;height:14px;"><svg style="left:-1px;top:-1px" width="16" height="14" viewBox="0 0 16 14"><rect x="4" y="9" width="6" height="2" fill="#000"/></svg></div>
<div class="rb" style="left:893px;top:187px;width:16px;height:14px;"><svg style="left:-1px;top:-1px" width="16" height="14" viewBox="0 0 16 14"><rect x="3.5" y="2.5" width="8" height="8" fill="none" stroke="#000"/><rect x="3" y="2" width="9" height="2" fill="#000"/></svg></div>
<div class="rb" style="left:911px;top:187px;width:16px;height:14px;"><svg style="left:-1px;top:-1px" width="16" height="14" viewBox="0 0 16 14"><path d="M4.7 3.3L11.3 9.7M11.3 3.3L4.7 9.7" stroke="#000" stroke-width="1.6" fill="none"/></svg></div>
<div style="left:223px;top:204px;width:706px;height:1px;background:#808080"></div>
<div style="left:223px;top:204px;width:1px;height:553px;background:#808080"></div>
<div style="left:223px;top:205px;width:689px;height:316px;background:#a3becb;overflow:hidden;border-left:1px solid #808080"><div class="t" style="left:435px;top:3px;color:#000080;letter-spacing:-0.08px">0000000000000005h</div><div class="t" style="left:7px;top:22px;color:#000;">Тип организации</div><div class="fld" style="left:196px;top:21px;width:189px;height:18px;"><div class="t" style="top:1px;left:0.500px">ЗАО</div></div><div class="t" style="left:7px;top:42px;color:#000;">Наименование организации</div><div class="fld" style="left:196px;top:41px;width:469px;height:18px;"><div class="t" style="top:1px;left:0.500px">Витязь  Папикян, Ситникова. ЭК-61 2 подгр.</div></div><div class="t" style="left:7px;top:62px;color:#000;">Внутренний учетный номер</div><div class="fld" style="left:196px;top:61px;width:189px;height:18px;"></div><div class="gb" style="left:392px;top:60px;width:178px;height:20px;"></div><div style="left:397px;top:63px;width:13px;height:13px;background:#fff;border:1px solid;border-color:#808080 #fff #fff #808080;box-shadow:inset 1px 1px 0 #404040,inset -1px -1px 0 #d4d0c8"></div><div class="t" style="left:413px;top:62px;color:#000;">Входит в состав корпорации</div><div class="t" style="left:7px;top:102px;color:#000;">ИНН</div><div class="fld" style="left:35px;top:101px;width:119px;height:18px;"><div class="t" style="top:1px;left:0.500px">7726228454</div></div><div class="t" style="left:160px;top:102px;color:#000;">ОКПО</div><div class="fld" style="left:196px;top:101px;width:105px;height:18px;"></div><div class="t" style="left:307px;top:102px;color:#000;">ОКДП</div><div class="fld" style="left:344px;top:101px;width:104px;height:18px;"></div><div class="t" style="left:456px;top:102px;color:#000080;">ОКВЭД</div><div class="fld" style="left:504px;top:101px;width:112px;height:18px;"></div><div class="t" style="left:7px;top:122px;color:#000;">Код плательщика НДС</div><div class="fld" style="left:196px;top:121px;width:189px;height:18px;"><div class="t" style="top:1px;left:0.500px">772601067</div></div><div class="rb" style="left:444px;top:125px;width:149px;height:25px;"></div><div class="t" style="left:461px;top:130px;"><u>М</u>аршруты  движения</div><div class="t" style="left:7px;top:142px;color:#000;">Индекс организации</div><div class="fld" style="left:196px;top:141px;width:189px;height:18px;"></div><div class="t" style="left:7px;top:162px;color:#000;">Государство</div><div class="fld" style="left:196px;top:161px;width:189px;height:18px;"><div class="t" style="top:1px;left:0.500px">Россия</div></div><div style="left:372px;top:163px;width:11px;height:14px;background:#c0c0c0;border:1px solid;border-color:#e0e0e0 #000 #000 #e0e0e0"><div class="t" style="left:1px;top:-1px;font-weight:bold;letter-spacing:0">...</div></div><div class="t" style="left:392px;top:162px;color:#000;">Город</div><div class="fld" style="left:434px;top:161px;width:182px;height:18px;"><div class="t" style="top:1px;left:0.500px">Москва</div></div><div style="left:603px;top:163px;width:11px;height:14px;background:#c0c0c0;border:1px solid;border-color:#e0e0e0 #000 #000 #e0e0e0"><div class="t" style="left:1px;top:-1px;font-weight:bold;letter-spacing:0">...</div></div><div class="t" style="left:7px;top:182px;color:#000;">Адрес организации</div><div class="fld" style="left:196px;top:181px;width:469px;height:18px;"><div class="t" style="top:1px;left:0.500px">Нахимовский пр-т, 12</div></div><div class="t" style="left:7px;top:202px;color:#000;">Тел.,факс</div><div class="fld" style="left:196px;top:201px;width:189px;height:18px;"></div><div class="t" style="left:7px;top:242px;color:#000;">Применять налоги</div><div class="fld" style="left:126px;top:241px;width:119px;height:18px;"><div class="t" style="top:1px;left:0.500px">всегда</div></div><div style="left:232px;top:243px;width:11px;height:14px;background:#c0c0c0;border:1px solid;border-color:#e0e0e0 #000 #000 #e0e0e0"><svg style="left:0;top:0" width="9" height="12" viewBox="0 0 9 12"><path d="M1 3h7l-3.5 4z" fill="#000"/><rect x="1" y="8" width="7" height="2" fill="#000"/></svg></div><div class="gb" style="left:252px;top:240px;width:336px;height:20px;"></div><div style="left:257px;top:243px;width:13px;height:13px;background:#fff;border:1px solid;border-color:#808080 #fff #fff #808080;box-shadow:inset 1px 1px 0 #404040,inset -1px -1px 0 #d4d0c8"></div><div class="t" style="left:273px;top:242px;color:#000;">При закупке применять налоги для таможенной декларации</div><div class="t" style="left:7px;top:282px;color:#000;">% скидки по умолчанию</div><div class="fld" style="left:196px;top:281px;width:56px;height:18px;"><div class="t" style="top:1px;right:2px;left:auto">0.000</div></div><div class="t" style="left:7px;top:302px;color:#000;">Максимальный долг. в НДЕ</div><div class="fld" style="left:196px;top:301px;width:112px;height:18px;"><div class="t" style="top:1px;right:2px;left:auto">0.00</div></div><div class="t" style="left:308px;top:302px;color:#000080;">,</div><div class="t" style="left:322px;top:302px;color:#000;">в базовой валюте</div><div class="fld" style="left:441px;top:301px;width:120px;height:18px;"><div class="t" style="top:1px;right:2px;left:auto">0.00</div></div></div>
<div class="chk" style="left:912px;top:205px;width:16px;height:316px;"></div>
<div class="rb2" style="left:912px;top:206px;width:16px;height:16px;"><svg style="left:-1px;top:-1px" width="16" height="16" viewBox="0 0 16 16"><path d="M4 9.5L8 5.5L12 9.5z" fill="#000"/></svg></div>
<div class="rb2" style="left:912px;top:222px;width:16px;height:15px;"></div>
<div class="rb2" style="left:912px;top:505px;width:16px;height:16px;"><svg style="left:-1px;top:-1px" width="16" height="16" viewBox="0 0 16 16"><path d="M4 6L12 6L8 10z" fill="#000"/></svg></div>
<div style="left:223px;top:521px;width:706px;height:1px;background:#fff"></div>
<div style="left:223px;top:522px;width:706px;height:1px;background:#808080"></div>
<div style="left:223px;top:523px;width:127px;height:173px;background:#a3becb"></div>
<div style="left:223px;top:523px;width:1px;height:173px;background:#808080"></div>
<div style="left:224px;top:523px;width:126px;height:17px;background:#57808f;border-top:1px solid #fff;border-left:1px solid #fff"></div>
<div style="left:224px;top:540px;width:126px;height:2px;background:#808080"></div>
<div class="t" style="left:226px;top:525px;color:#fff">Группа</div>
<div style="left:224px;top:542px;width:126px;height:15px;background:#f6f6f6"></div>
<div class="t" style="left:225px;top:542px;">Верхний уровень</div>
<div class="chk" style="left:350px;top:523px;width:16px;height:173px;"></div>
<div class="rb2" style="left:350px;top:523px;width:16px;height:16px;"><svg style="left:-1px;top:-1px" width="16" height="16" viewBox="0 0 16 16"><path d="M4 9.5L8 5.5L12 9.5z" fill="#000"/></svg></div>
<div class="rb2" style="left:350px;top:602px;width:16px;height:16px;"></div>
<div class="rb2" style="left:350px;top:680px;width:16px;height:16px;"><svg style="left:-1px;top:-1px" width="16" height="16" viewBox="0 0 16 16"><path d="M4 6L12 6L8 10z" fill="#000"/></svg></div>
<div style="left:366px;top:523px;width:3px;height:173px;background:#d4d0c8"></div>
<div style="left:367px;top:523px;width:1px;height:173px;background:#fff"></div>
<div style="left:368px;top:523px;width:1px;height:173px;background:#808080"></div>
<div style="left:369px;top:523px;width:543px;height:173px;background:#a3becb;overflow:hidden"><div class="t" style="left:5px;top:2px;color:#000;">Наименование банка</div><div class="fld" style="left:139px;top:1px;width:371px;height:18px;"><div class="t" style="top:1px;left:0.500px">АКБ Иронбанк</div></div><div style="left:497px;top:3px;width:11px;height:14px;background:#c0c0c0;border:1px solid;border-color:#e0e0e0 #000 #000 #e0e0e0"><div class="t" style="left:1px;top:-1px;font-weight:bold;letter-spacing:0">...</div></div><div class="t" style="left:146px;top:42px;color:#000080;">БИК/код МФО банка</div><div class="t" style="left:383px;top:42px;color:#000080;">Счет</div><div class="t" style="left:47px;top:62px;color:#000080;">Основной</div><div class="fld" style="left:139px;top:61px;width:133px;height:18px;"><div class="t" style="top:1px;left:0.500px">044552158</div></div><div class="fld" style="left:300px;top:61px;width:210px;height:18px;"></div><div class="t" style="left:47px;top:82px;color:#000080;">Для РКЦ</div><div class="fld" style="left:139px;top:81px;width:133px;height:18px;"></div><div class="fld" style="left:300px;top:81px;width:210px;height:18px;"><div class="t" style="top:1px;left:0.500px">30101810500000000158</div></div><div class="t" style="left:47px;top:102px;color:#000;">3-й счет для платежных документов</div><div class="fld" style="left:300px;top:101px;width:210px;height:18px;"></div><div class="t" style="left:5px;top:122px;color:#0000ff;">Адрес банка</div><div class="fld" style="left:139px;top:121px;width:371px;height:18px;"><div class="t" style="top:1px;left:0.500px">Маросейка, 9</div><div style="left:70px;top:1px;width:1px;height:14px;background:#000"></div></div><div class="t" style="left:5px;top:142px;color:#000;">Примечание</div><div class="fld" style="left:139px;top:141px;width:371px;height:18px;"></div><div class="gb" style="left:132px;top:160px;width:203px;height:20px;"></div><div style="left:137px;top:164px;width:13px;height:13px;background:#fff;border:1px solid;border-color:#808080 #fff #fff #808080;box-shadow:inset 1px 1px 0 #404040,inset -1px -1px 0 #d4d0c8"></div><div class="t" style="left:153px;top:162px;color:#000;">использовать банк по умолчанию</div></div>
<div class="chk" style="left:912px;top:523px;width:16px;height:173px;"></div>
<div class="rb2" style="left:912px;top:523px;width:16px;height:16px;"><svg style="left:-1px;top:-1px" width="16" height="16" viewBox="0 0 16 16"><path d="M4 9.5L8 5.5L12 9.5z" fill="#000"/></svg></div>
<div class="rb2" style="left:912px;top:539px;width:16px;height:16px;"></div>
<div class="rb2" style="left:912px;top:680px;width:16px;height:16px;"><svg style="left:-1px;top:-1px" width="16" height="16" viewBox="0 0 16 16"><path d="M4 6L12 6L8 10z" fill="#000"/></svg></div>
<div style="left:220px;top:696px;width:711px;height:5px;background:#d4d0c8"></div>
<div style="left:220px;top:696px;width:711px;height:1px;background:#fff"></div>
<div style="left:220px;top:699px;width:711px;height:1px;background:#808080"></div>
<div style="left:220px;top:700px;width:711px;height:1px;background:#404040"></div>
<div style="left:224px;top:701px;width:704px;height:55px;background:#94a9a6"></div>
<div style="left:928px;top:204px;width:1px;height:553px;background:#fff"></div>
<div style="left:223px;top:756px;width:706px;height:1px;background:#fff"></div>
<div class="chk" style="left:336px;top:701px;width:16px;height:55px;"></div>
<div class="rb2" style="left:336px;top:740px;width:16px;height:16px;"><svg style="left:-1px;top:-1px" width="16" height="16" viewBox="0 0 16 16"><path d="M4 6L12 6L8 10z" fill="#000"/></svg></div>
<div style="left:352px;top:701px;width:1px;height:55px;background:#fff"></div>
<div style="left:649px;top:701px;width:1px;height:55px;background:#fff"></div>
<div style="left:781px;top:701px;width:1px;height:55px;background:#fff"></div>
<div class="chk" style="left:912px;top:701px;width:16px;height:55px;"></div>
<div class="rb2" style="left:912px;top:740px;width:16px;height:16px;"><svg style="left:-1px;top:-1px" width="16" height="16" viewBox="0 0 16 16"><path d="M4 6L12 6L8 10z" fill="#000"/></svg></div>
</div>
</body>
</html>
